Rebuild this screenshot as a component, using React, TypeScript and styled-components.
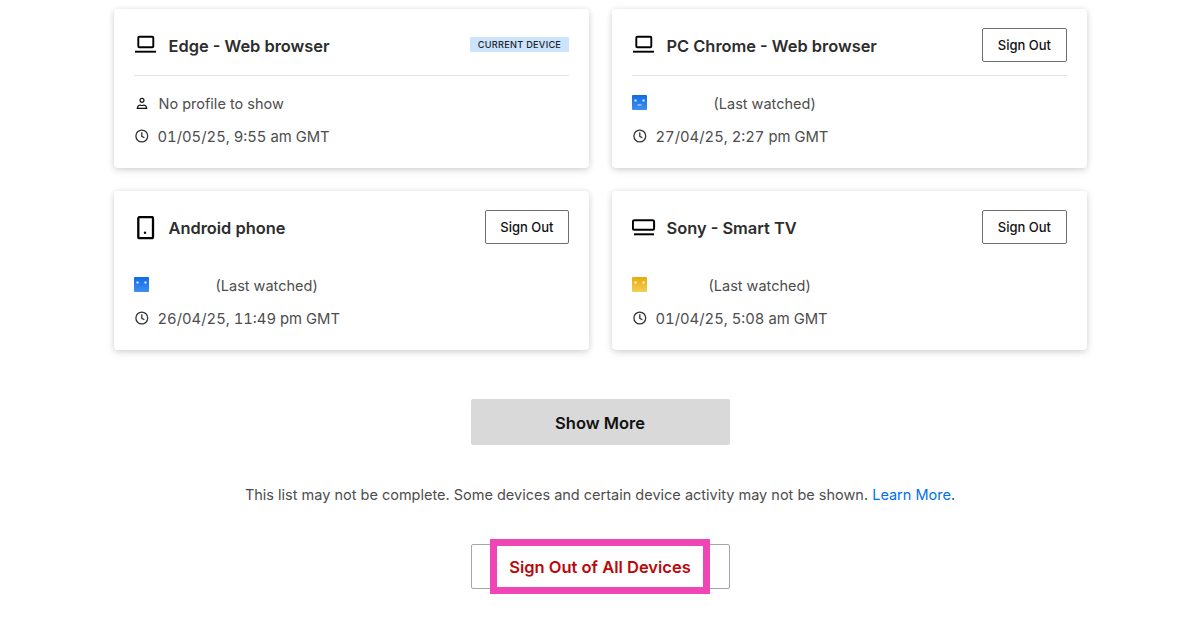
import React from "react";
import styled, { createGlobalStyle } from "styled-components";

const Global = createGlobalStyle`
  html, body { margin: 0; padding: 0; background: #fff; }
  body { font-family: Inter, "Liberation Sans", sans-serif; color: #333; overflow: hidden; }
  #root { height: 628px; }
`;

const Page = styled.main`
  width: 973px;
  margin: 0 auto;
  padding-top: 9px;
  display: flex;
  flex-direction: column;
  align-items: center;
`;

const Grid = styled.section`
  width: 100%;
  display: grid;
  grid-template-columns: 475.5px 475px;
  grid-auto-rows: 159px;
  column-gap: 22.5px;
  row-gap: 23px;
`;

const Card = styled.article`
  background: #fff;
  border-radius: 4px;
  box-shadow: 0 1px 6px rgba(0, 0, 0, 0.16), 0 4px 10px rgba(0, 0, 0, 0.05);
  padding: 19px 20px 0;
  display: flex;
  flex-direction: column;
`;

const Header = styled.header<{ $divider: boolean }>`
  height: 47px;
  display: flex;
  align-items: flex-start;
  justify-content: space-between;
  border-bottom: 1px solid ${(p) => (p.$divider ? "#e3e3e3" : "transparent")};
`;

const Title = styled.div`
  height: 36px;
  display: flex;
  align-items: center;
  gap: 10px;
`;

const DeviceIcon = styled.svg`
  width: 25px;
  height: 25px;
  flex: none;
  color: #000;
  margin-top: 1px;
`;

const Name = styled.h3`
  margin: 0;
  font-size: 16.4px;
  font-weight: 600;
  color: #2d2d2d;
`;

const Badge = styled.span`
  margin-top: 9px;
  height: 15px;
  width: 99px;
  background: #cbe3fb;
  border-radius: 1px;
  font-size: 9.2px;
  font-weight: 500;
  line-height: 15px;
  text-align: center;
  letter-spacing: 0.25px;
  color: #22262c;
`;

const SignOut = styled.button`
  width: 84.2px;
  height: 34px;
  box-sizing: border-box;
  background: #fff;
  border: 1px solid #6d6d6d;
  border-radius: 2px;
  font-family: inherit;
  font-size: 13px;
  font-weight: 500;
  color: #111;
  padding: 0;
`;

const Rows = styled.div`
  padding-top: 17px;
  display: flex;
  flex-direction: column;
  gap: 13px;
`;

const Row = styled.div`
  height: 20px;
  display: flex;
  align-items: center;
  font-size: 14.5px;
  color: #4d4d4d;
`;

const DateText = styled.span`
  font-size: 14.8px;
  font-variant-numeric: tabular-nums;
  padding-top: 1px;
`;

const SmallIcon = styled.svg<{ $gap: number }>`
  width: 16px;
  height: 16px;
  flex: none;
  margin-right: ${(p) => p.$gap}px;
  color: #333;
`;

const Avatar = styled.svg`
  width: 15px;
  height: 15px;
  flex: none;
  margin-top: -1px;
`;

const Watched = styled.span<{ $gap: number }>`
  margin-left: ${(p) => p.$gap}px;
`;

const ShowMore = styled.button`
  margin-top: 49px;
  width: 259px;
  height: 46px;
  background: #d9d9d9;
  border: 0;
  border-radius: 2px;
  font-family: inherit;
  font-size: 16.5px;
  font-weight: 600;
  color: #111;
  padding: 1px 0 0;
`;

const Note = styled.p`
  margin: 40px 0 0;
  height: 20px;
  line-height: 20px;
  font-size: 14.5px;
  color: #4d4d4d;
  white-space: nowrap;
`;

const Link = styled.a`
  color: #0071eb;
`;

const SignOutAllWrap = styled.div`
  margin-top: 39px;
  position: relative;
  width: 259px;
  height: 45px;
`;

const SignOutAll = styled.button`
  width: 100%;
  height: 100%;
  box-sizing: border-box;
  background: #fff;
  border: 1px solid #a6a6a6;
  border-radius: 2px;
  font-family: inherit;
  font-size: 16.5px;
  font-weight: 600;
  color: #b9090b;
  padding: 0;
`;

const Highlight = styled.div`
  position: absolute;
  left: 19px;
  top: -5px;
  width: 220px;
  height: 55px;
  box-sizing: border-box;
  border: 7px solid #ee46b4;
  pointer-events: none;
`;

const Laptop = () => (
  <DeviceIcon viewBox="0 0 25 25" fill="none" stroke="currentColor">
    <rect x="4.300" y="2.800" width="15" height="10.500" rx="1" strokeWidth="1.900" />
    <path d="M1 17.700h21" strokeWidth="1.900" />
  </DeviceIcon>
);

const Phone = () => (
  <DeviceIcon viewBox="0 0 25 25" fill="none" stroke="currentColor">
    <rect x="4.300" y="1" width="14.700" height="21.200" rx="1.500" strokeWidth="2.300" />
    <circle cx="11" cy="16.700" r="1.200" fill="currentColor" stroke="none" />
  </DeviceIcon>
);

const Tv = () => (
  <DeviceIcon viewBox="0 0 25 25" fill="none" stroke="currentColor">
    <rect x="0.900" y="4.200" width="21.200" height="9.600" rx="1.500" strokeWidth="2" />
    <path d="M2 18.300h20" strokeWidth="2" />
  </DeviceIcon>
);

const Person = () => (
  <SmallIcon $gap={9} viewBox="0 0 16 16" fill="none" stroke="#111" strokeWidth="1.200">
    <circle cx="8" cy="5.300" r="2" />
    <path d="M3.300 13.400c.3-2.400 1.800-3.400 3-3.400l1 .5h1.400l1-.5c1.200 0 2.700 1 3 3.400z" />
  </SmallIcon>
);

const Clock = () => (
  <SmallIcon $gap={8} viewBox="0 0 16 16" fill="none" stroke="currentColor" strokeWidth="1.300">
    <circle cx="7.800" cy="8" r="5.900" />
    <path d="M7.800 4.200V8.300l2.600 1.500" />
  </SmallIcon>
);

const ProfileAvatar = ({ id, top, bottom, smile }: { id: string; top: string; bottom: string; smile: boolean }) => (
  <Avatar viewBox="0 0 15 15">
    <defs>
      <linearGradient id={id} x1="0" y1="0" x2="0" y2="1">
        <stop offset="0" stopColor={top} />
        <stop offset="1" stopColor={bottom} />
      </linearGradient>
    </defs>
    <rect width="15" height="15" rx="1" fill={`url(#${id})`} />
    <rect x="2.500" y="4.500" width="2" height="2" fill="#fff" opacity="0.9" />
    <rect x="10.500" y="4.500" width="2" height="2" fill="#fff" opacity="0.9" />
    {smile && <path d="M5.500 9.500h4v1h-4z" fill="#fff" opacity="0.85" />}
  </Avatar>
);

export default function App() {
  return (
    <>
      <Global />
      <Page>
        <Grid>
          <Card>
            <Header $divider>
              <Title>
                <Laptop />
                <Name>Edge - Web browser</Name>
              </Title>
              <Badge>CURRENT DEVICE</Badge>
            </Header>
            <Rows>
              <Row>
                <Person />
                <span>No profile to show</span>
              </Row>
              <Row>
                <Clock />
                <DateText>01/05/25, 9:55 am GMT</DateText>
              </Row>
            </Rows>
          </Card>
          <Card>
            <Header $divider>
              <Title>
                <Laptop />
                <Name>PC Chrome - Web browser</Name>
              </Title>
              <SignOut>Sign Out</SignOut>
            </Header>
            <Rows>
              <Row>
                <ProfileAvatar id="a1" top="#0f6be6" bottom="#3f8ff0" smile />
                <Watched $gap={67}>(Last watched)</Watched>
              </Row>
              <Row>
                <Clock />
                <DateText>27/04/25, 2:27 pm GMT</DateText>
              </Row>
            </Rows>
          </Card>
          <Card>
            <Header $divider={false}>
              <Title>
                <Phone />
                <Name>Android phone</Name>
              </Title>
              <SignOut>Sign Out</SignOut>
            </Header>
            <Rows>
              <Row>
                <ProfileAvatar id="a2" top="#0f6be6" bottom="#3f8ff0" smile={false} />
                <Watched $gap={67}>(Last watched)</Watched>
              </Row>
              <Row>
                <Clock />
                <DateText>26/04/25, 11:49 pm GMT</DateText>
              </Row>
            </Rows>
          </Card>
          <Card>
            <Header $divider={false}>
              <Title>
                <Tv />
                <Name>Sony - Smart TV</Name>
              </Title>
              <SignOut>Sign Out</SignOut>
            </Header>
            <Rows>
              <Row>
                <ProfileAvatar id="a3" top="#e6ac0c" bottom="#f2cf55" smile={false} />
                <Watched $gap={62}>(Last watched)</Watched>
              </Row>
              <Row>
                <Clock />
                <DateText>01/04/25, 5:08 am GMT</DateText>
              </Row>
            </Rows>
          </Card>
        </Grid>
        <ShowMore>Show More</ShowMore>
        <Note>
          This list may not be complete. Some devices and certain device activity may not be shown.{" "}
          <Link>Learn More</Link>.
        </Note>
        <SignOutAllWrap>
          <SignOutAll>Sign Out of All Devices</SignOutAll>
          <Highlight />
        </SignOutAllWrap>
      </Page>
    </>
  );
}
